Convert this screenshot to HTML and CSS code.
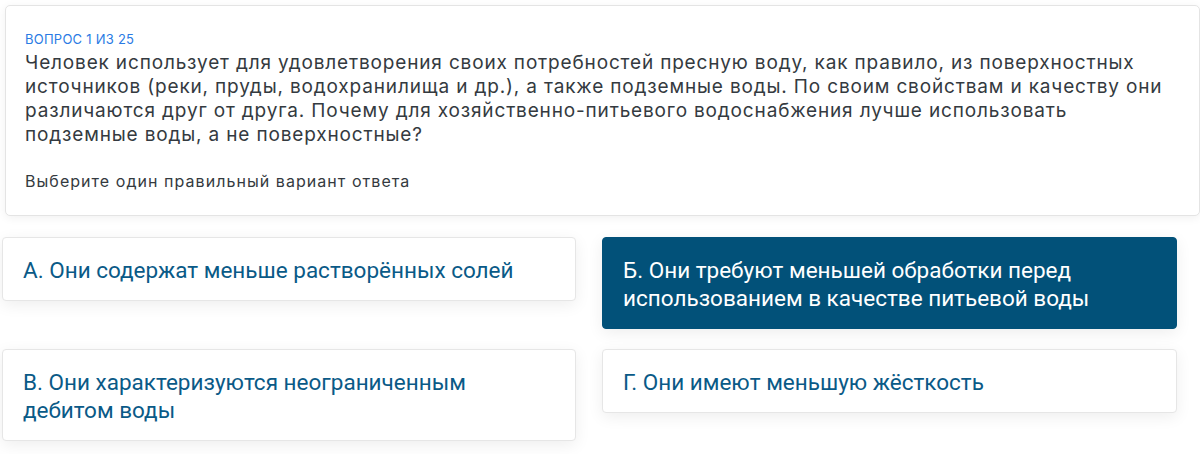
FILE: index.html
```html
<!DOCTYPE html>
<html lang="ru">
<head>
<meta charset="utf-8">
<link rel="stylesheet" href="styles.css">
</head>
<body>
<div class="page">
  <section class="question-card">
    <div class="counter">ВОПРОС 1 ИЗ 25</div>
    <p class="question">Человек использует для удовлетворения своих потребностей пресную воду, как правило, из поверхностных источников (реки, пруды, водохранилища и др.), а также подземные воды. По своим свойствам и качеству они различаются друг от друга. Почему для хозяйственно-питьевого водоснабжения лучше использовать подземные воды, а не поверхностные?</p>
    <p class="hint">Выберите один правильный вариант ответа</p>
  </section>
  <div class="answers">
    <div class="answer">А. Они содержат меньше растворённых солей</div>
    <div class="answer selected">Б. Они требуют меньшей обработки перед использованием в качестве питьевой воды</div>
    <div class="answer">В. Они характеризуются неограниченным дебитом воды</div>
    <div class="answer">Г. Они имеют меньшую жёсткость</div>
  </div>
</div>
</body>
</html>
```
FILE: styles.css
```css
html, body {
  margin: 0;
  padding: 0;
  background: #fff;
}
.page {
  width: 1200px;
  height: 454px;
  overflow: hidden;
}
.question-card {
  margin: 5px 0 0 5px;
  box-sizing: border-box;
  width: 1195px;
  height: 211px;
  background: #fff;
  border: 1px solid #e4e4e4;
  border-radius: 5px;
  box-shadow: 0 2px 10px rgba(0, 0, 0, 0.06);
  padding: 25px 32px 0 19px;
  font-family: Inter, "Noto Sans", sans-serif;
}
.counter {
  font-size: 13px;
  line-height: 16px;
  letter-spacing: 0.25px;
  color: #2a7be4;
}
.question {
  margin: 4px 0 0;
  font-size: 19px;
  line-height: 24px;
  letter-spacing: 0.84px;
  color: #343a40;
}
.hint {
  margin: 24px 0 0;
  font-size: 16px;
  line-height: 20px;
  letter-spacing: 1.05px;
  color: #343a40;
}
.answers {
  display: grid;
  grid-template-columns: 574px 575px;
  column-gap: 26px;
  row-gap: 20px;
  align-items: start;
  margin: 21px 0 0 2px;
  width: 1175px;
}
.answer {
  background: #fff;
  border: 1px solid #e6e6e6;
  border-radius: 4px;
  box-shadow: 0 4px 16px rgba(0, 0, 0, 0.07);
  padding: 18px 20px 16px 20px;
  font-family: Roboto, "Liberation Sans", sans-serif;
  font-size: 22.5px;
  line-height: 28px;
  color: #0a5a87;
}
.answer.selected {
  background: #025179;
  border-color: #025179;
  color: #fff;
}
```
